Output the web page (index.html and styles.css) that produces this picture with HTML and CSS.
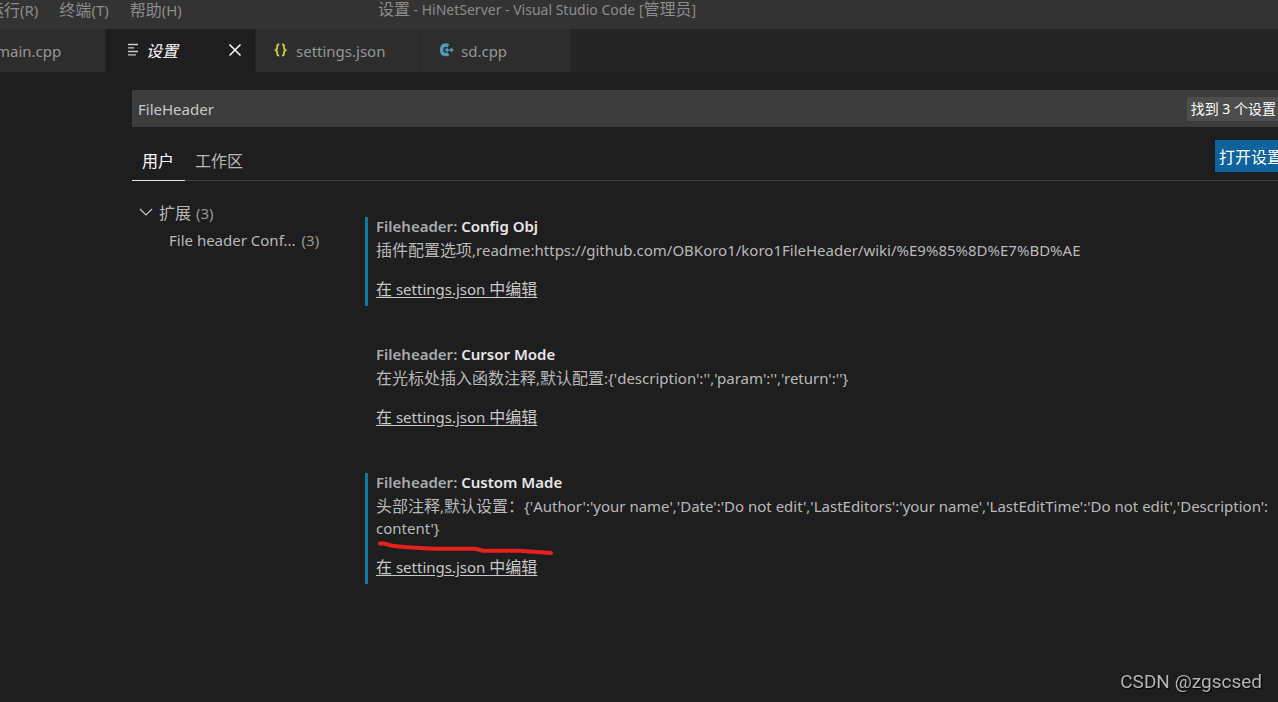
FILE: index.html
```html
<!DOCTYPE html>
<html lang="zh-CN">
<head>
<meta charset="utf-8">
<title>设置 - HiNetServer - Visual Studio Code</title>
<link rel="stylesheet" href="styles.css">
</head>
<body>
<header class="titlebar">
  <nav class="menu">
    <button class="menu-item"><span class="zh">运行</span>(R)</button>
    <button class="menu-item"><span class="zh">终端</span>(T)</button>
    <button class="menu-item"><span class="zh">帮助</span>(H)</button>
  </nav>
  <div class="window-title"><span class="zh">设置</span> - HiNetServer - Visual Studio Code [<span class="zh">管理员</span>]</div>
</header>
<div class="tabs">
  <div class="tab tab-first">main.cpp</div>
  <div class="tab tab-active">
    <svg class="tab-icon" width="16" height="16" viewBox="0 0 16 16" stroke="#c8c8c8" stroke-width="1.300"><path d="M3 2.500h10M3 5.800h6M3 9.500h10M3 12.800h8"/></svg>
    <em class="zh">设置</em>
    <button class="close" aria-label="关闭"><svg width="14" height="14" viewBox="0 0 14 14" stroke="#fff" stroke-width="1.500"><path d="M1.500 1.500l11 11M12.500 1.500l-11 11"/></svg></button>
  </div>
  <div class="tab tab-json">
    <svg class="tab-icon" width="16" height="16" viewBox="0 0 16 16" fill="none" stroke="#cbcb41" stroke-width="1.800"><path d="M6.200 2.500H5.500Q4.200 2.500 4.200 4V6Q4.200 7.700 1.800 8Q4.200 8.300 4.200 10V12Q4.200 13.500 5.500 13.500H6.200M9 2.500h.7Q11 2.500 11 4V6Q11 7.700 13.400 8Q11 8.300 11 10V12Q11 13.500 9.700 13.500H9"/></svg>
    <span>settings.json</span>
  </div>
  <div class="tab tab-cpp">
    <svg class="tab-icon" width="16" height="16" viewBox="0 0 16 16" fill="none" stroke="#519aba"><path stroke-width="3.500" d="M10.500 3.800Q9 3.100 7.600 3.100Q3.600 3.500 3.600 8Q3.800 12.500 7.600 12.600Q9 12.600 10.500 11.900"/><path stroke-width="1.500" d="M7 8h4.200M9.100 5.900v4.200M11.400 8h4.200M13.500 5.900v4.200"/></svg>
    <span>sd.cpp</span>
  </div>
</div>
<main class="editor">
  <div class="search">
    <input class="search-input" type="text" value="FileHeader" aria-label="搜索设置">
    <span class="badge">找到 3 个设置</span>
  </div>
  <div class="scope">
    <button class="scope-tab scope-on">用户</button>
    <button class="scope-tab">工作区</button>
    <button class="open-button">打开设置</button>
  </div>
  <div class="content">
    <nav class="tree">
      <div class="tree-row">
        <svg width="14" height="14" viewBox="0 0 14 14" fill="none" stroke="#c5c5c5" stroke-width="1.200"><path d="M1 3l6 6 6-6"/></svg>
        <span class="zh">扩展</span><span class="count">(3)</span>
      </div>
      <div class="tree-row tree-child"><span>File header Conf...</span><span class="count">(3)</span></div>
    </nav>
    <div class="settings">
      <section class="setting modified">
        <h2 class="name"><span class="category">Fileheader:</span> Config Obj</h2>
        <p class="desc"><span class="zh">插件配置选项</span>,readme:https://github.com/OBKoro1/koro1FileHeader/wiki/%E9%85%8D%E7%BD%AE</p>
        <a class="edit" href="#"><span class="zh">在</span> settings.json <span class="zh">中编辑</span></a>
      </section>
      <section class="setting">
        <h2 class="name"><span class="category">Fileheader:</span> Cursor Mode</h2>
        <p class="desc"><span class="zh">在光标处插入函数注释</span>,<span class="zh">默认配置</span>:{'description':'','param':'','return':''}</p>
        <a class="edit" href="#"><span class="zh">在</span> settings.json <span class="zh">中编辑</span></a>
      </section>
      <section class="setting modified">
        <h2 class="name"><span class="category">Fileheader:</span> Custom Made</h2>
        <p class="desc"><span class="zh">头部注释</span>,<span class="zh">默认设置：</span>{'Author':'your name','Date':'Do not edit','LastEditors':'your name','LastEditTime':'Do not edit','Description':<br>content'}</p>
        <svg class="stroke" width="180" height="16" viewBox="0 0 180 16" fill="none" stroke="#e81f1c" stroke-width="4" stroke-linecap="round" stroke-linejoin="round"><path d="M4 3.500H8L15 5.500Q34 8 60 8.800H99L107 10.800H143L175 13"/></svg>
        <a class="edit" href="#"><span class="zh">在</span> settings.json <span class="zh">中编辑</span></a>
      </section>
    </div>
  </div>
</main>
<div class="watermark">CSDN @zgscsed</div>
</body>
</html>
```
FILE: styles.css
```css
* { box-sizing: border-box; }
body {
  margin: 0;
  min-height: 100vh;
  overflow: hidden;
  background: #1e1e1e;
  color: #b9b9b9;
  font: 15px/22px "Noto Sans", "Noto Sans CJK SC", sans-serif;
}
button { font: inherit; color: inherit; background: none; border: 0; padding: 0; white-space: nowrap; }
.zh { font-size: 16px; }
.titlebar {
  position: relative;
  display: flex;
  height: 29px;
  background: #333333;
  color: #8c8c8c;
}
.menu { display: flex; gap: 21px; margin-left: -12px; height: 20px; line-height: 20px; }
.window-title { position: absolute; left: 0; right: 0; top: 0; padding-right: 204px; font-size: 14px; line-height: 19px; text-align: center; pointer-events: none; }
.tabs { display: flex; height: 43px; background: #252526; }
.tab { display: flex; align-items: center; background: #2d2d2d; color: #969696; border-right: 1px solid #252526; }
.tab-first { width: 106px; text-indent: -4px; }
.tab-active { width: 150px; background: #1e1e1e; color: #fff; padding-left: 19px; gap: 5px; }
.tab-json { width: 165px; padding-left: 17px; gap: 7px; }
.tab-cpp { width: 149px; padding-left: 17px; gap: 7px; border-right: 0; }
.tab-icon { flex: none; margin-bottom: 2px; }
.close { display: flex; margin: 0 13px 2px auto; }
.editor { padding: 18px 0 0 132px; }
.search { display: flex; align-items: center; height: 37px; background: #3c3c3c; }
.search-input { flex: 1; min-width: 0; height: 37px; padding: 0 6px; border: 0; outline: 0; background: transparent; color: #c8c8c8; font: inherit; }
.badge { flex: none; margin-right: -2px; padding: 1px 4px; border-radius: 2px; background: #4d4d4d; color: #fff; font-size: 14px; white-space: nowrap; }
.scope { display: flex; height: 54px; padding-top: 13px; border-bottom: 1px solid #404040; font-size: 16px; }
.scope-tab { padding: 1px 0 0; margin: 0 0 -1px 10px; }
.scope-on { margin-left: 0; padding: 2px 11px 0 10px; border-bottom: 1px solid #e7e7e7; color: #fff; }
.open-button { width: 63px; height: 32px; margin-left: auto; padding: 2px 0 0 4px; overflow: hidden; background: #0e639c; color: #fff; text-align: left; }
.content { display: flex; }
.tree { width: 233px; flex: none; padding: 18px 0 0 7px; }
.tree-row { display: flex; align-items: center; gap: 6px; height: 27px; }
.tree-child { padding-left: 30px; }
.count { color: #969696; }
.tree-row .zh + .count { margin-left: -1px; }
.settings { flex: 1; min-width: 0; display: grid; gap: 39px; padding-top: 36px; }
.setting { position: relative; padding: 0 0 6px 8px; border-left: 3px solid transparent; }
.modified { border-left-color: #0c7d9d; }
.name { margin: 0 0 4px; font-size: 15px; line-height: 18px; font-weight: 600; color: #e7e7e7; }
.category { color: #aaaaaa; }
.desc { margin: 0 0 17px; white-space: nowrap; }
.edit { display: block; color: #c8c8c8; line-height: 22px; text-underline-offset: 2px; }
.stroke { position: absolute; left: 8px; top: 67px; }
.watermark { position: fixed; right: 16px; bottom: 8px; color: #b4b4b4; font: 19px/24px Roboto, sans-serif; text-shadow: 1px 1px 1px #000; }
```
